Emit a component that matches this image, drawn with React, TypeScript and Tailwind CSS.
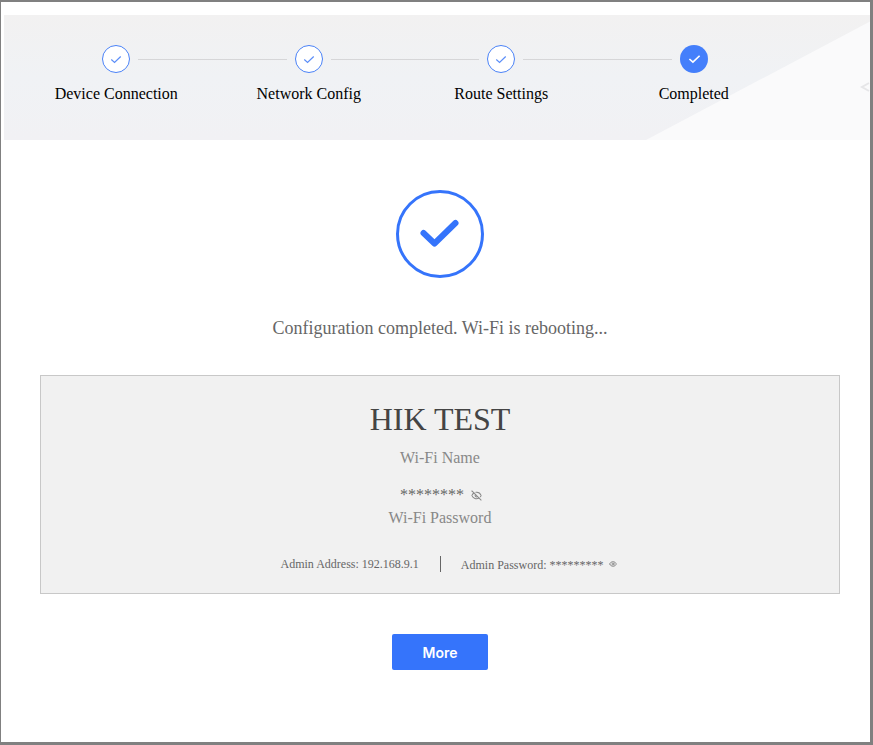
import { Eye, EyeOff } from "lucide-react";

const steps = ["Device Connection", "Network Config", "Route Settings", "Completed"];

function CheckIcon({ className }: { className: string }) {
  return (
    <svg viewBox="0 0 14 10" fill="none" className={className}>
      <path d="M1.5 5 L5.3 8.4 L12.5 1.5" stroke="currentColor" strokeWidth="1.4" />
    </svg>
  );
}

function StepDot({ done }: { done: boolean }) {
  if (done) {
    return (
      <div className="flex h-[28px] w-[28px] shrink-0 items-center justify-center rounded-full border border-[#4a82f7] bg-white text-[#5c8ef8]">
        <CheckIcon className="h-[9px] w-[12px]" />
      </div>
    );
  }
  return (
    <div className="flex h-[28px] w-[28px] shrink-0 items-center justify-center rounded-full bg-[#447ffb] text-white">
      <CheckIcon className="h-[10px] w-[13px] [&_path]:[stroke-width:1.8]" />
    </div>
  );
}

export default function App() {
  return (
    <div className="relative h-[745px] w-[873px] overflow-hidden border-t-2 border-r-[3px] border-b-[3px] border-l border-[#808080] bg-white font-['Liberation_Serif',serif]">
      <div className="relative ml-[3px] mt-[13px] h-[125px] overflow-hidden bg-gradient-to-b from-[#f2f1f1] via-[#f0f2f5] to-[#f1f1f4]">
        <div className="absolute inset-0 bg-[#fafafb] [clip-path:polygon(642px_125px,869px_5px,869px_125px)]" />
        <svg viewBox="0 0 10 12" className="absolute right-0 top-[66px] h-[12px] w-[10px]" fill="none">
          <path d="M9 2 L2 6 L9 10" stroke="#e6e6e8" strokeWidth="2" />
        </svg>
        <div className="relative">
          <div className="flex items-center pl-[98px] pt-[30px]">
            <StepDot done />
            <div className="mx-[8px] h-px w-[149px] bg-[#d6d6d8]" />
            <StepDot done />
            <div className="mx-[8px] h-px w-[148px] bg-[#d6d6d8]" />
            <StepDot done />
            <div className="mx-[8px] h-px w-[149px] bg-[#d6d6d8]" />
            <StepDot done={false} />
          </div>
          <div className="ml-[16px] mt-[11px] grid w-[770px] grid-cols-4 text-center text-[16px] leading-[20px] text-black">
            {steps.map((s) => (
              <div key={s}>{s}</div>
            ))}
          </div>
        </div>
      </div>

      <div className="ml-[39px] mr-[30px] flex flex-col items-center">
        <svg viewBox="0 0 90 90" className="mt-[49px] h-[90px] w-[90px]" fill="none">
          <circle cx="45" cy="45" r="42.5" stroke="#3574fb" strokeWidth="3" />
          <path d="M28.5 44 L39.5 54.5 L60.5 34" stroke="#3574fb" strokeWidth="6" strokeLinecap="round" strokeLinejoin="round" />
        </svg>
        <div className="mt-[37px] text-[18px] leading-[24px] text-[#666]">Configuration completed. Wi-Fi is rebooting...</div>

        <div className="mt-[35px] flex h-[219px] w-[800px] flex-col items-center border border-[#c8c8c8] bg-[#f1f1f1]">
          <div className="mt-[25px] text-[32px] leading-[36px] text-[#444]">HIK TEST</div>
          <div className="mt-[11px] text-[16px] leading-[20px] text-[#888]">Wi-Fi Name</div>
          <div className="ml-[2px] mt-[18px] flex items-center gap-[7px] text-[16px] leading-[18px] text-[#666]">
            <span>********</span>
            <EyeOff size={11} strokeWidth={2.2} className="text-[#888]" />
          </div>
          <div className="mt-[4px] text-[16px] leading-[20px] text-[#888]">Wi-Fi Password</div>
          <div className="ml-[17px] mt-[27px] flex items-center text-[12px] leading-[16px] text-[#666]">
            <span>Admin Address: 192.168.9.1</span>
            <div className="ml-[21px] mr-[20px] h-[16px] w-px bg-[#666]" />
            <span className="pt-[2px]">Admin Password: *********</span>
            <Eye size={8} strokeWidth={2.8} className="ml-[5px] text-[#888]" />
          </div>
        </div>

        <button className="mt-[40px] h-[36px] w-[96px] rounded-[2px] bg-[#3574fb] font-['Inter',sans-serif] text-[14px] font-semibold text-white">
          More
        </button>
      </div>
    </div>
  );
}
